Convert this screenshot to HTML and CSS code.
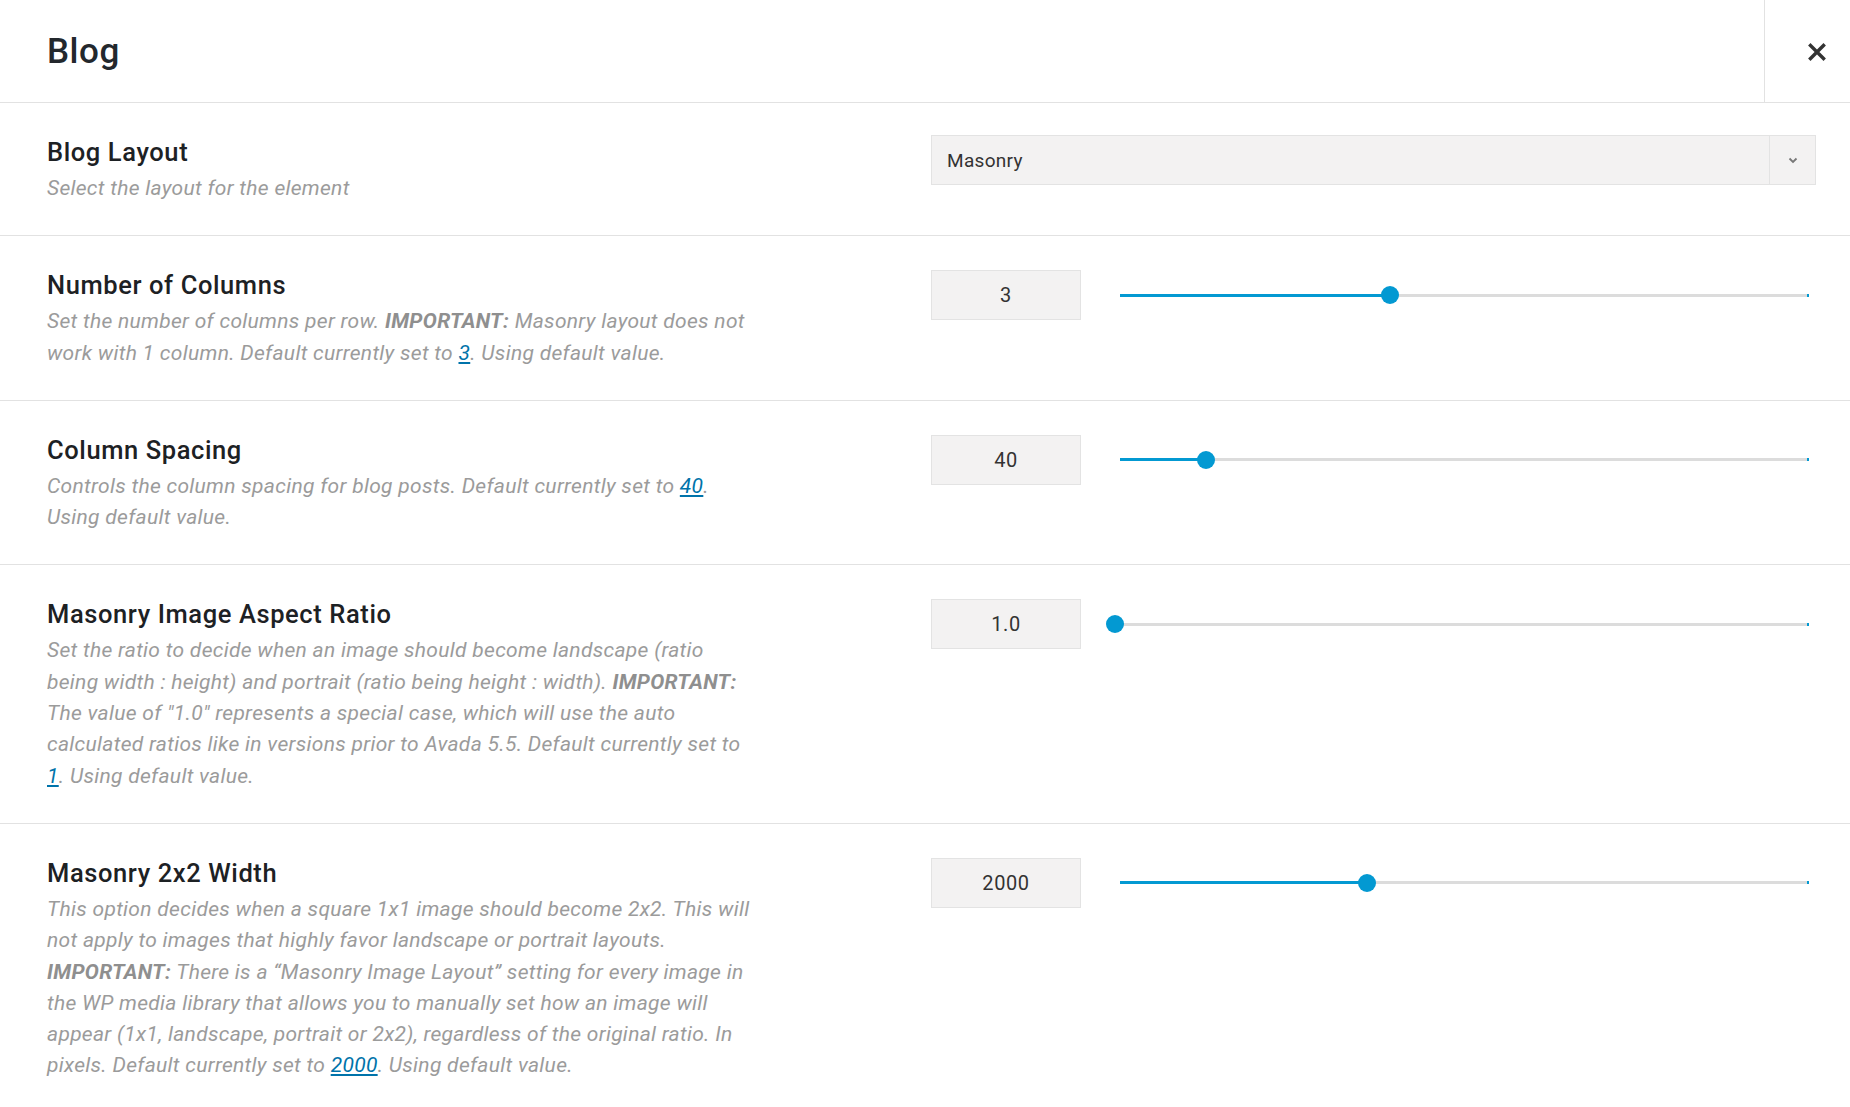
FILE: index.html
```html
<!DOCTYPE html>
<html lang="en">
<head>
<meta charset="UTF-8" />
<title>Blog</title>
<link rel="stylesheet" href="styles.css">
</head>
<body>
  <div class="panel">
    <header class="panel-head">
      <h1 class="panel-title">Blog</h1>
      <button class="close-btn" aria-label="Close">
        <svg width="18" height="18" viewBox="0 0 18 18" aria-hidden="true">
          <path d="M2.5 2.5 L15.5 15.5 M15.5 2.5 L2.5 15.5" stroke="#333" stroke-width="3.4" stroke-linecap="square" fill="none"/>
        </svg>
      </button>
    </header>

    <div class="options">
      <div class="option">
        <div class="option-info">
          <h3>Blog Layout</h3>
          <p>Select the layout for the element</p>
        </div>
        <div class="option-control">
          <div class="select">
            <span class="select-text">Masonry</span>
            <span class="select-arrow">
              <svg width="10" height="7" viewBox="0 0 10 7" aria-hidden="true">
                <path d="M1.5 1.5 L5 5 L8.5 1.5" stroke="#777" stroke-width="1.8" fill="none"/>
              </svg>
            </span>
          </div>
        </div>
      </div>

      <div class="option">
        <div class="option-info">
          <h3>Number of Columns</h3>
          <p>Set the number of columns per row. <strong>IMPORTANT:</strong> Masonry layout does not work with 1 column. Default currently set to <a href="#">3</a>. Using default value.</p>
        </div>
        <div class="option-control">
          <div class="range-row">
            <div class="range-value">3</div>
            <div class="range">
              <div class="range-fill" style="width: 39.2%"></div>
              <span class="range-thumb" style="left: 39.2%"></span>
            </div>
          </div>
        </div>
      </div>

      <div class="option">
        <div class="option-info">
          <h3>Column Spacing</h3>
          <p>Controls the column spacing for blog posts. Default currently set to <a href="#">40</a>. Using default value.</p>
        </div>
        <div class="option-control">
          <div class="range-row">
            <div class="range-value">40</div>
            <div class="range">
              <div class="range-fill" style="width: 12.5%"></div>
              <span class="range-thumb" style="left: 12.5%"></span>
            </div>
          </div>
        </div>
      </div>

      <div class="option">
        <div class="option-info">
          <h3>Masonry Image Aspect Ratio</h3>
          <p>Set the ratio to decide when an image should become landscape (ratio being width : height) and portrait (ratio being height : width). <strong>IMPORTANT:</strong> The value of "1.0" represents a special case, which will use the auto calculated ratios like in versions prior to Avada 5.5. Default currently set to <a href="#">1</a>. Using default value.</p>
        </div>
        <div class="option-control">
          <div class="range-row">
            <div class="range-value">1.0</div>
            <div class="range">
              <div class="range-fill" style="width: 0%"></div>
              <span class="range-thumb" style="left: -0.8%"></span>
            </div>
          </div>
        </div>
      </div>

      <div class="option">
        <div class="option-info">
          <h3>Masonry 2x2 Width</h3>
          <p>This option decides when a square 1x1 image should become 2x2. This will not apply to images that highly favor landscape or portrait layouts. <strong>IMPORTANT:</strong> There is a “Masonry Image Layout” setting for every image in the WP media library that allows you to manually set how an image will appear (1x1, landscape, portrait or 2x2), regardless of the original ratio. In pixels. Default currently set to <a href="#">2000</a>. Using default value.</p>
        </div>
        <div class="option-control">
          <div class="range-row">
            <div class="range-value">2000</div>
            <div class="range">
              <div class="range-fill" style="width: 35.8%"></div>
              <span class="range-thumb" style="left: 35.8%"></span>
            </div>
          </div>
        </div>
      </div>
    </div>
  </div>
</body>
</html>
```

FILE: styles.css
```css
* {
  box-sizing: border-box;
}
body {
  margin: 0;
  font-family: Roboto, 'Liberation Sans', sans-serif;
  background: #fff;
  color: #23282d;
  overflow: hidden;
}

/* cabeçalho do painel */
.panel-head {
  display: flex;
  height: 103px;
  border-bottom: 1px solid #e2e2e2;
}
.panel-title {
  flex: 1;
  margin: 0;
  padding-left: 47px;
  display: flex;
  align-items: center;
  font-size: 35px;
  letter-spacing: 0.5px;
  font-weight: 500;
  color: #23282d;
}
.close-btn {
  width: 86px;
  border: none;
  border-left: 1px solid #e2e2e2;
  background: none;
  padding: 2px 0 0 18px;
  display: flex;
  align-items: center;
  justify-content: center;
  cursor: pointer;
}

/* linhas de opções */
.option {
  display: grid;
  grid-template-columns: 710px 1fr;
  column-gap: 174px;
  padding: 34px 34px 31px 47px;
  border-bottom: 1px solid #e2e2e2;
}
.option-info h3 {
  margin: 0 0 6px;
  font-size: 25.5px;
  letter-spacing: 0.6px;
  line-height: 30px;
  font-weight: 500;
  color: #1d2124;
}
.option-info p {
  margin: 0;
  font-size: 21px;
  letter-spacing: 0.3px;
  line-height: 31.3px;
  font-style: italic;
  color: #9b9b9b;
}
.option-info strong {
  font-weight: 700;
  color: #8f8f8f;
}
.option-info a {
  color: #0073aa;
  text-decoration: underline;
}

/* select */
.select {
  display: flex;
  height: 50px;
  margin-top: -2px;
  background: #f3f2f2;
  border: 1px solid #e3e3e3;
}
.select-text {
  flex: 1;
  display: flex;
  align-items: center;
  padding-left: 15px;
  font-size: 19px;
  letter-spacing: 0.3px;
  color: #333;
}
.select-arrow {
  width: 46px;
  border-left: 1px solid #e3e3e3;
  display: flex;
  align-items: center;
  justify-content: center;
}

/* slider */
.range-row {
  display: flex;
  align-items: center;
}
.range-value {
  width: 150px;
  height: 50px;
  display: flex;
  align-items: center;
  justify-content: center;
  background: #f3f2f2;
  border: 1px solid #e3e3e3;
  font-size: 20px;
  letter-spacing: 0.6px;
  color: #333;
}
.range {
  flex: 1;
  position: relative;
  height: 3px;
  margin: 0 7px 0 39px;
  background: #dcdcdc;
}
.range::after {
  content: '';
  position: absolute;
  right: 0;
  top: 0;
  width: 2px;
  height: 3px;
  background: #0399d2;
}
.range-fill {
  height: 100%;
  background: #0399d2;
}
.range-thumb {
  position: absolute;
  top: 50%;
  width: 18px;
  height: 18px;
  margin: -9px 0 0 -9px;
  border-radius: 50%;
  background: #0399d2;
}
```
